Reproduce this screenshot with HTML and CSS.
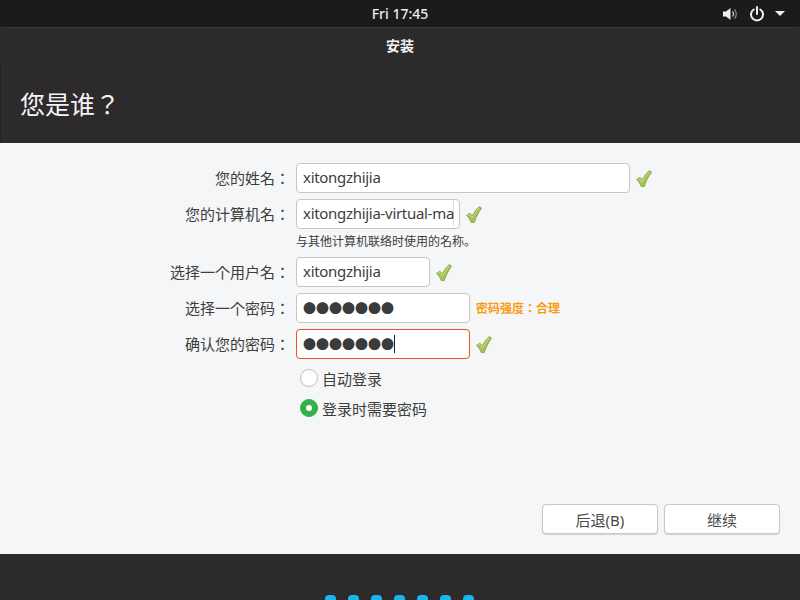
FILE: index.html
```html
<!DOCTYPE html>
<html lang="zh-CN">
<head>
<meta charset="utf-8">
<title>安装</title>
<link rel="stylesheet" href="styles.css">
</head>
<body>
<svg class="defs" width="0" height="0" aria-hidden="true">
  <symbol id="tick" viewBox="0 0 16 17">
    <path d="M0.600 9.400 L4 7.200 L6.200 10 C8 6.400 10.400 3 13.400 0.500 L15.600 2.200 C12.400 6.400 10 11 8.400 16.400 L5.200 16.600 C4.300 13.800 2.700 11.400 0.600 9.400 Z" fill="#a3c350" stroke="#8aa353" stroke-width="0.900" stroke-linejoin="round"/>
    <path d="M2.200 9.500 L3.800 8.600 L6.300 12 C8.300 8 10.800 4.600 13.500 1.800" fill="none" stroke="#cde28f" stroke-width="0.900"/>
  </symbol>
</svg>
<div class="panel">
  <div class="clock">Fri 17:45</div>
  <div class="tray">
    <svg class="ico-vol" viewBox="0 0 16 16" width="16" height="16"><path d="M1 5.500h3L8.500 2v12L4 10.500H1z" fill="#eee"/><path d="M10.500 5.500a3.500 3.500 0 0 1 0 5" fill="none" stroke="#ccc" stroke-width="1.300"/><path d="M12.500 3.500a6.500 6.500 0 0 1 0 9" fill="none" stroke="#888" stroke-width="1.300"/></svg>
    <svg class="ico-pow" viewBox="0 0 16 16" width="16" height="16"><path d="M4.700 3.500a6 6 0 1 0 6.600 0" fill="none" stroke="#eee" stroke-width="2" stroke-linecap="round"/><path d="M8 1v7" stroke="#eee" stroke-width="2" stroke-linecap="round"/></svg>
    <div class="caret-down"></div>
  </div>
</div>
<div class="window">
  <header class="head">
    <div class="title">安装</div>
    <div class="head-main"><h1 class="page-title">您是谁？</h1></div>
  </header>
  <main class="content">
    <div class="form">
      <label class="lbl">您的姓名：</label>
      <div class="row"><div class="field w-334">xitongzhijia</div><svg class="tick"><use href="#tick"/></svg></div>

      <label class="lbl">您的计算机名：</label>
      <div class="row"><div class="field w-164"><span class="clip-text">xitongzhijia-virtual-ma</span></div><svg class="tick"><use href="#tick"/></svg></div>

      <div></div>
      <div class="hint">与其他计算机联络时使用的名称。</div>

      <label class="lbl">选择一个用户名：</label>
      <div class="row"><div class="field w-134">xitongzhijia</div><svg class="tick"><use href="#tick"/></svg></div>

      <label class="lbl">选择一个密码：</label>
      <div class="row"><div class="field w-174 dots">●●●●●●●</div><span class="strength">密码强度：合理</span></div>

      <label class="lbl">确认您的密码：</label>
      <div class="row"><div class="field w-174 dots focus">●●●●●●●<span class="cursor"></span></div><svg class="tick"><use href="#tick"/></svg></div>
    </div>
    <div class="radios">
      <div class="radio-row"><span class="radio"></span><span>自动登录</span></div>
      <div class="radio-row"><span class="radio on"></span><span>登录时需要密码</span></div>
    </div>
    <div class="actions">
      <button class="btn">后退(B)</button>
      <button class="btn">继续</button>
    </div>
  </main>
  <footer class="foot">
    <span class="dot"></span><span class="dot"></span><span class="dot"></span><span class="dot"></span><span class="dot"></span><span class="dot"></span><span class="dot"></span>
  </footer>
</div>
</body>
</html>
```
FILE: styles.css
```css
* { box-sizing: border-box; }
html, body { margin: 0; padding: 0; height: 100%; overflow: hidden; }
body {
  width: 800px; height: 600px;
  font-family: "Noto Sans", "Noto Sans CJK JP", sans-serif;
  font-feature-settings: "locl" 0;
  background: #4a1048;
  display: flex; flex-direction: column;
}
.defs { position: absolute; }
.panel {
  height: 27px; flex: none;
  background: #1b1b1b;
  display: grid; grid-template-columns: 1fr auto 1fr; align-items: center;
  color: #eee; font-size: 14px;
}
.clock { grid-column: 2; line-height: 26px; font-weight: 500; }
.tray { grid-column: 3; justify-self: end; display: flex; align-items: center; padding-right: 15px; }
.ico-vol { margin-right: 11px; }
.ico-pow { margin-right: 10px; }
.caret-down { width: 0; height: 0; border-left: 5px solid transparent; border-right: 5px solid transparent; border-top: 5px solid #eee; }
.window { flex: 1; display: flex; flex-direction: column; min-height: 0; }
.head { height: 116px; flex: none; background: #2c2a2a; border-top: 1px solid #3a3838; border-radius: 3px 3px 0 0; color: #f3f3f3; display: flex; flex-direction: column; }
.title { text-align: center; font-size: 14px; font-weight: 700; line-height: 36px; height: 36px; }
.head-main { flex: 1; border-left: 1px solid #242222; }
.page-title { margin: 22px 0 0 19px; font-size: 25px; font-weight: 400; line-height: 36px; }
.content { height: 411px; flex: none; background: #f5f6f7; padding-top: 20px; color: #3d3d3d; font-size: 15px; position: relative; display: flex; flex-direction: column; }
.form { display: grid; grid-template-columns: 296px 1fr; row-gap: 6px; }
.lbl { text-align: right; padding-right: 6px; line-height: 30px; }
.row { display: flex; align-items: center; height: 30px; }
.field {
  height: 30px; background: #fff; border: 1px solid #c6c6c4; border-radius: 4px;
  padding: 0 6px; line-height: 27px; font-size: 15px; letter-spacing: -0.3px; color: #3d3d3d; white-space: nowrap; flex: none;
}
.w-334 { width: 334px; }
.w-164 { width: 164px; }
.w-134 { width: 134px; }
.w-174 { width: 174px; }
.clip-text { display: inline-block; width: 151px; border-right: 1px solid #ddd; height: 26px; line-height: 26px; vertical-align: top; }
.dots { font-size: 13px; letter-spacing: 0; line-height: 28px; color: #3b3b3b; }
.focus { border-color: #e9541f; }
.cursor { display: inline-block; width: 1px; height: 18px; background: #222; vertical-align: -4px; }
.tick { width: 16px; height: 17px; margin-left: 6px; flex: none; }
.strength { margin-left: 6px; color: #f99b11; font-size: 12px; font-weight: 700; }
.hint { font-size: 12px; line-height: 16px; margin: -1px 0 1px; color: #3d3d3d; }
.radios { margin: 8px 0 0 300px; display: flex; flex-direction: column; gap: 8px; }
.radio-row { display: flex; align-items: center; height: 22px; gap: 4px; }
.radio { width: 18px; height: 18px; border-radius: 50%; border: 1px solid #bfbfbf; background: #fff; flex: none; }
.radio.on { background: #33b04a; border-color: #33b04a; position: relative; }
.radio.on::after { content: ""; position: absolute; left: 5px; top: 5px; width: 6px; height: 6px; border-radius: 50%; background: #fff; }
.actions { position: absolute; right: 20px; bottom: 20px; display: flex; gap: 6px; }
.btn {
  width: 116px; height: 30px; border: 1px solid #c8c8c6; border-radius: 4px; background: #fff;
  box-shadow: 0 1px 1px rgba(0,0,0,.15);
  font: inherit; font-size: 15px; color: #4a4a4a; padding: 0;
}
.foot { flex: 1; background: #2c2a2a; display: flex; justify-content: center; align-items: flex-start; gap: 12px; padding: 41px 1px 0 0; }
.dot { width: 11px; height: 12px; background: #19b6ee; border-radius: 4px; flex: none; }
```
